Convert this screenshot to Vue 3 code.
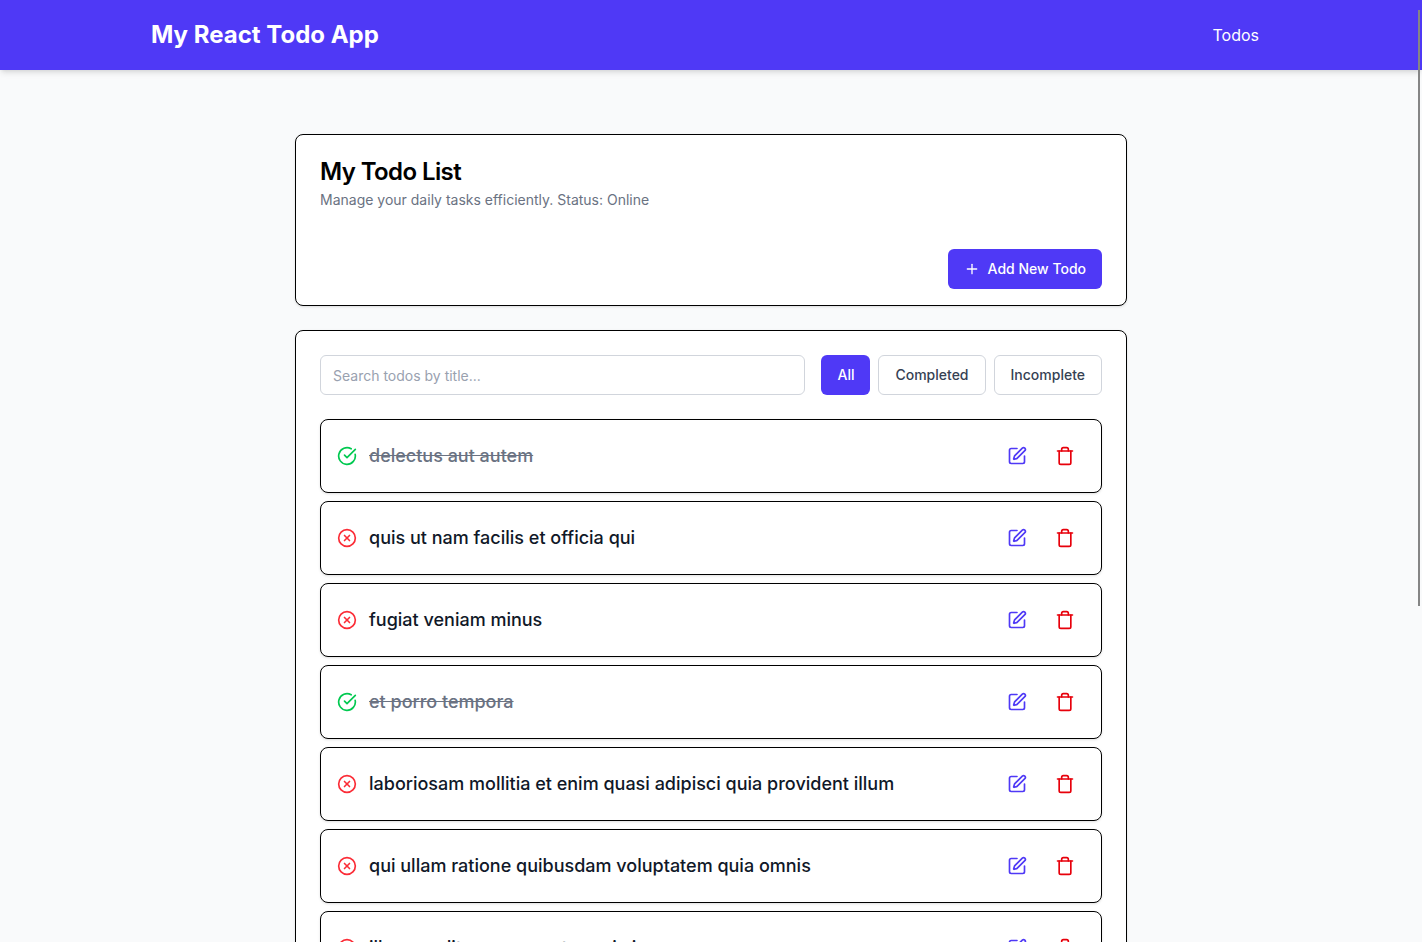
<script setup>
import { computed, ref } from 'vue'

const search = ref('')
const filter = ref('All')
const filters = ['All', 'Completed', 'Incomplete']

const todos = ref([
  { id: 1, title: 'delectus aut autem', completed: true },
  { id: 2, title: 'quis ut nam facilis et officia qui', completed: false },
  { id: 3, title: 'fugiat veniam minus', completed: false },
  { id: 4, title: 'et porro tempora', completed: true },
  { id: 5, title: 'laboriosam mollitia et enim quasi adipisci quia provident illum', completed: false },
  { id: 6, title: 'qui ullam ratione quibusdam voluptatem quia omnis', completed: false },
  { id: 7, title: 'illo expedita consequatur quia in', completed: false }
])

const visibleTodos = computed(() =>
  todos.value.filter((todo) => {
    const matchesTitle = todo.title.includes(search.value.toLowerCase())
    const matchesState = filter.value === 'All' || (filter.value === 'Completed') === todo.completed
    return matchesTitle && matchesState
  })
)

function removeTodo(id) {
  todos.value = todos.value.filter((todo) => todo.id !== id)
}
</script>

<template>
  <div class="page">
    <header class="topbar">
      <div class="topbar-inner">
        <a class="brand" href="#">My React Todo App</a>
        <nav>
          <a class="nav-link" href="#todos">Todos</a>
        </nav>
      </div>
    </header>

    <main id="todos" class="content">
      <section class="card intro">
        <div class="intro-text">
          <h1>My Todo List</h1>
          <p>Manage your daily tasks efficiently. Status: Online</p>
        </div>
        <div class="intro-actions">
          <button class="btn primary" type="button">
            <svg class="icon small" viewBox="0 0 24 24" aria-hidden="true">
              <path d="M5 12h14" />
              <path d="M12 5v14" />
            </svg>
            Add New Todo
          </button>
        </div>
      </section>

      <section class="card list-card">
        <div class="toolbar">
          <input v-model="search" class="search" type="text" aria-label="Search todos by title" placeholder="Search todos by title..." />
          <div class="filters">
            <button
              v-for="name in filters"
              :key="name"
              type="button"
              class="btn"
              :class="filter === name ? 'primary' : 'outline'"
              @click="filter = name"
            >{{ name }}</button>
          </div>
        </div>

        <ul class="todos">
          <li v-for="todo in visibleTodos" :key="todo.id" class="todo">
            <svg v-if="todo.completed" class="icon done" viewBox="0 0 24 24" aria-hidden="true">
              <path d="M21.801 10A10 10 0 1 1 17 3.335" />
              <path d="m9 11 3 3L22 4" />
            </svg>
            <svg v-else class="icon open" viewBox="0 0 24 24" aria-hidden="true">
              <circle cx="12" cy="12" r="10" />
              <path d="m15 9-6 6" />
              <path d="m9 9 6 6" />
            </svg>
            <a class="todo-title" :class="{ struck: todo.completed }" :href="'#todo-' + todo.id">{{ todo.title }}</a>
            <div class="todo-actions">
              <button class="icon-btn edit" type="button" :aria-label="'Edit ' + todo.title">
                <svg class="icon" viewBox="0 0 24 24" aria-hidden="true">
                  <path d="M12 3H5a2 2 0 0 0-2 2v14a2 2 0 0 0 2 2h14a2 2 0 0 0 2-2v-7" />
                  <path d="M18.375 2.625a1 1 0 0 1 3 3l-9.013 9.014a2 2 0 0 1-.853.505l-2.873.84a.5.5 0 0 1-.62-.62l.84-2.873a2 2 0 0 1 .506-.852z" />
                </svg>
              </button>
              <button class="icon-btn delete" type="button" :aria-label="'Delete ' + todo.title" @click="removeTodo(todo.id)">
                <svg class="icon" viewBox="0 0 24 24" aria-hidden="true">
                  <path d="M3 6h18" />
                  <path d="M19 6v14c0 1-1 2-2 2H7c-1 0-2-1-2-2V6" />
                  <path d="M8 6V4c0-1 1-2 2-2h4c1 0 2 1 2 2v2" />
                </svg>
              </button>
            </div>
          </li>
        </ul>
      </section>
    </main>
    <div class="scroll-thumb" aria-hidden="true"></div>
  </div>
</template>

<style>
html {
  scrollbar-width: none;
}

body {
  margin: 0;
  background: #f9fafb;
}
</style>

<style scoped>
.page,
.page * {
  box-sizing: border-box;
}

.page {
  height: 100vh;
  overflow-y: auto;
  scrollbar-width: none;
  background: #f9fafb;
  color: #000;
  font-family: Inter, "Liberation Sans", sans-serif;
  font-size: 16px;
  line-height: 24px;
}

.topbar {
  padding: 16px;
  background: #4f39f6;
  color: #fff;
  box-shadow: 0 4px 6px -1px rgb(0 0 0 / 0.1), 0 2px 4px -2px rgb(0 0 0 / 0.1);
}

.topbar-inner {
  display: flex;
  align-items: center;
  justify-content: space-between;
  max-width: 1120px;
  min-height: 38px;
  margin: 0 auto;
}

.brand {
  color: inherit;
  font-size: 24px;
  font-weight: 700;
  line-height: 32px;
  font-variation-settings: "opsz" 24;
  text-decoration: none;
}

.nav-link {
  padding: 8px 12px;
  color: inherit;
  text-decoration: none;
}

.content {
  display: flex;
  flex-direction: column;
  gap: 24px;
  max-width: 896px;
  margin: 0 auto;
  padding: 64px 32px;
}

.card {
  border: 1px solid #000;
  border-radius: 8px;
  background: #fff;
  box-shadow: 0 1px 3px 0 rgb(0 0 0 / 0.1), 0 1px 2px -1px rgb(0 0 0 / 0.1);
}

.intro-text {
  display: flex;
  flex-direction: column;
  gap: 4px;
  padding: 24px 24px 22px;
}

h1 {
  margin: 0;
  font-size: 24px;
  font-weight: 600;
  line-height: 26px;
  letter-spacing: -0.025em;
  font-variation-settings: "opsz" 24;
}

.intro-text p {
  margin: 0;
  color: #6a7282;
  font-size: 14px;
  line-height: 22px;
}

.intro-actions {
  display: flex;
  justify-content: flex-end;
  padding: 16px 24px;
}

.btn {
  display: inline-flex;
  align-items: center;
  justify-content: center;
  gap: 8px;
  height: 40px;
  padding: 0 16px;
  border: 0;
  border-radius: 6px;
  font: 500 14px/20px Inter, "Liberation Sans", sans-serif;
  white-space: nowrap;
  cursor: pointer;
}

.primary {
  background: #4f39f6;
  color: #fff;
}

.outline {
  border: 1px solid #d1d5dc;
  background: #fff;
  color: #364153;
}

.list-card {
  padding: 24px;
}

.toolbar {
  display: flex;
  gap: 16px;
  margin-bottom: 24px;
}

.search {
  flex: 1;
  min-width: 0;
  height: 40px;
  padding: 8px 12px;
  border: 1px solid #d1d5dc;
  border-radius: 6px;
  background: #fff;
  color: #101828;
  font: 400 14px/20px Inter, "Liberation Sans", sans-serif;
}

.search::placeholder {
  color: #99a1af;
  opacity: 1;
}

.filters {
  display: flex;
  gap: 8px;
}

.todos {
  display: flex;
  flex-direction: column;
  gap: 8px;
  margin: 0;
  padding: 0;
  list-style: none;
}

.todo {
  display: flex;
  align-items: center;
  gap: 12px;
  padding: 16px;
  border: 1px solid #000;
  border-radius: 8px;
  background: #fff;
  box-shadow: 0 1px 3px 0 rgb(0 0 0 / 0.1), 0 1px 2px -1px rgb(0 0 0 / 0.1);
}

.todo-title {
  flex: 1;
  color: #101828;
  font-size: 18px;
  font-weight: 500;
  line-height: 28px;
  font-variation-settings: "opsz" 18;
  text-decoration: none;
}

.struck {
  color: #6a7282;
  text-decoration: line-through;
}

.todo-actions {
  display: flex;
  gap: 8px;
}

.icon {
  display: block;
  flex: none;
  width: 20px;
  height: 20px;
  fill: none;
  stroke: currentColor;
  stroke-width: 2;
  stroke-linecap: round;
  stroke-linejoin: round;
}

.small {
  width: 16px;
  height: 16px;
}

.icon-btn {
  display: flex;
  align-items: center;
  justify-content: center;
  width: 40px;
  height: 40px;
  padding: 0;
  border: 0;
  border-radius: 6px;
  background: transparent;
  cursor: pointer;
}

.done {
  color: #00c950;
}

.open {
  color: #fb2c36;
}

.edit {
  color: #4f39f6;
}

.delete {
  color: #e7000b;
}

.scroll-thumb {
  position: fixed;
  top: 10px;
  right: 2px;
  width: 2px;
  height: 596px;
  background: #858585;
}
</style>
